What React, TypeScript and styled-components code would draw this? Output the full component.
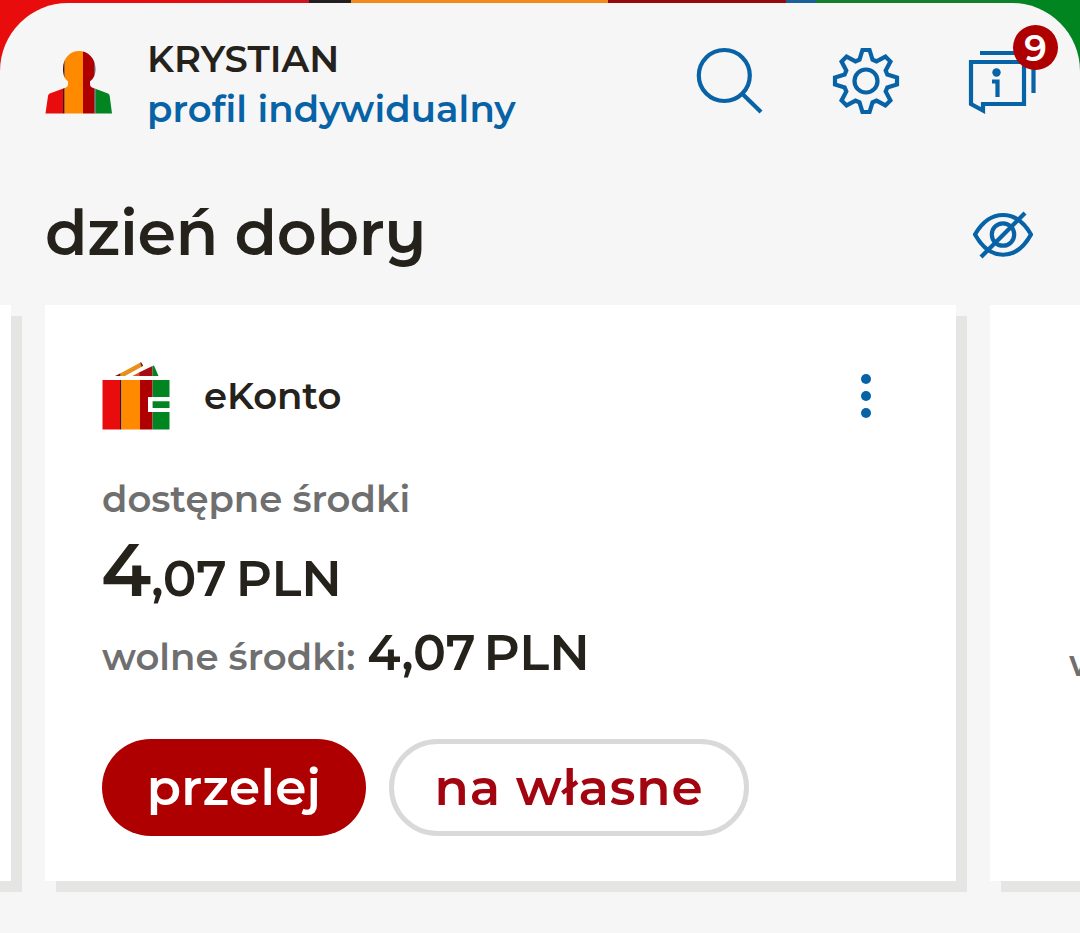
import styled, { createGlobalStyle } from "styled-components";

const colors = {
  ink: "#25221c",
  grey: "#6f6f6f",
  blue: "#0762a6",
  red: "#e80c0c",
  black: "#221f20",
  orange: "#ff8a00",
  darkRed: "#ae0000",
  green: "#008521",
  page: "#f6f6f6",
  shadow: "#e5e5e4",
};

const GlobalStyle = createGlobalStyle`
  * {
    box-sizing: border-box;
  }

  body {
    margin: 0;
    font-family: Montserrat, Inter, "Liberation Sans", sans-serif;
    font-weight: 600;
    color: ${colors.ink};
  }
`;

// The display face takes a few letter forms (n, p, r, y) from the alternate cut
const Alt = styled.span`
  font-family: "Montserrat Alternates", Montserrat, Inter, "Liberation Sans", sans-serif;
`;

const Wrapper = styled.div`
  width: 1080px;
  height: 933px;
  padding-top: 3px;
  overflow: hidden;
  background: linear-gradient(
    90deg,
    ${colors.red} 0 150px,
    #d01220 309px,
    ${colors.black} 309px 351px,
    #f58a1c 351px 608px,
    #950a10 608px 786px,
    #1c5f98 786px 816px,
    #138030 816px 980px,
    ${colors.green} 1040px
  );
`;

const Sheet = styled.main`
  height: 930px;
  border-radius: 68px 68px 0 0;
  background-color: ${colors.page};
`;

const Header = styled.header`
  display: flex;
  align-items: flex-start;
  padding: 31px 44px 0 45px;
`;

const IconBox = styled.div`
  position: relative;
  margin-top: 13px;
  height: 68px;
`;

const Icon = styled.svg`
  display: block;
  width: 68px;
  height: 68px;
  overflow: visible;
  fill: none;
  stroke: ${colors.blue};
  stroke-width: 4.2;
`;

const Logo = styled.svg`
  display: block;
  flex: none;
  width: 68px;
  height: 68px;
`;

const Profile = styled.div`
  display: flex;
  flex-direction: column;
  margin-left: 34px;
  font-size: 37px;
  line-height: 50px;
  white-space: nowrap;
`;

const ProfileKind = styled.span`
  color: ${colors.blue};
  letter-spacing: 0.1px;
`;

const Actions = styled.nav`
  display: flex;
  gap: 68px;
  margin-left: auto;
`;

const Badge = styled.span`
  position: absolute;
  top: -22px;
  left: 45px;
  display: flex;
  align-items: center;
  justify-content: center;
  width: 45px;
  height: 45px;
  border-radius: 50%;
  background-color: ${colors.darkRed};
  color: white;
  font-size: 36px;
`;

const Greeting = styled.div`
  display: flex;
  align-items: center;
  justify-content: space-between;
  height: 76px;
  margin-top: 61px;
  padding: 0 47px 0 45px;
`;

const Title = styled.h1`
  margin: 0;
  font-size: 62px;
  font-weight: 600;
  line-height: 76px;
  letter-spacing: -0.35px;
`;

const EyeIcon = styled(Icon)`
  width: 60px;
  height: 48px;
`;

const Carousel = styled.div`
  display: flex;
  gap: 34px;
  margin-top: 34px;
  margin-left: -900px;
`;

const Card = styled.section`
  flex: none;
  width: 911px;
  height: 576px;
  padding: 57px;
  background-color: white;
  box-shadow: 11px 11px 0 ${colors.shadow};
`;

const CardHeader = styled.div`
  display: flex;
  align-items: center;
`;

const AccountName = styled.h2`
  margin: 0 auto 0 34px;
  font-size: 37px;
  font-weight: 600;
  line-height: 44px;
`;

const Menu = styled.div`
  display: flex;
  flex-direction: column;
  gap: 7px;
  margin-right: 28px;
`;

const Dot = styled.i`
  width: 10px;
  height: 10px;
  border-radius: 50%;
  background-color: ${colors.blue};
`;

const Label = styled.span`
  color: ${colors.grey};
  font-size: 37px;
  line-height: 46px;
  white-space: nowrap;
`;

const AvailableLabel = styled(Label)`
  display: block;
  margin-top: 46px;
`;

const Amount = styled.div`
  display: flex;
  align-items: baseline;
  height: 74px;
  margin: 11px 0 0 -1px;
  font-size: 50px;
  line-height: 1;
`;

const Whole = styled.span`
  font-size: 74px;
  line-height: 1;
`;

const Currency = styled.span<{ $gap: number }>`
  margin-left: ${(props) => props.$gap}px;
`;

const FreeFunds = styled.div`
  display: flex;
  align-items: baseline;
  height: 50px;
  margin-top: 21px;
  font-size: 50px;
  line-height: 50px;
`;

const FreeValue = styled.span`
  margin-left: 12px;
  font-size: 49px;
`;

const Buttons = styled.div`
  display: flex;
  gap: 23px;
  margin-top: 61px;
`;

const Button = styled.button<{ $primary?: boolean }>`
  width: ${(props) => (props.$primary ? 264 : 360)}px;
  height: 97px;
  padding: 0;
  border: ${(props) => (props.$primary ? "none" : "5px solid #d9d9d9")};
  border-radius: 49px;
  background-color: ${(props) => (props.$primary ? colors.darkRed : "white")};
  color: ${(props) => (props.$primary ? "white" : "#a30510")};
  font: inherit;
  font-size: 50px;
  letter-spacing: ${(props) => (props.$primary ? 0.3 : 0.9)}px;
  white-space: nowrap;
`;

const NextCard = styled(Card)`
  padding: 335px 0 0 79px;
  overflow: hidden;
`;

// Tooth outline, built from polar points around the centre of the gear
const gearPoints = Array.from({ length: 8 }, (_, i) =>
  [
    [-6.5, 31.2],
    [6.5, 31.2],
    [17, 22.3],
    [28, 22.3],
  ].map(([deg, radius]) => {
    const angle = ((i * 45 + deg) * Math.PI) / 180;
    return `${(34 + radius * Math.sin(angle)).toFixed(2)},${(34 - radius * Math.cos(angle)).toFixed(2)}`;
  })
)
  .flat()
  .join(" ");

function UserLogo() {
  return (
    <Logo viewBox="0 0 68 68">
      <clipPath id="user">
        <path d="M18 22C18 11 25 4 34 4S50.500 11 50.500 22C50.500 28 48.500 31.500 45 34.500V37.500Q45 39.500 47 40.500L63 46.500Q64.500 47.200 64.700 49L67 66.500H.5L3 49Q3.200 47.200 4.700 46.500L21 40.500Q23 39.500 23 37.500V34.500C19.500 31.500 18 28 18 22Z" />
      </clipPath>
      <g clipPath="url(#user)">
        <path fill={colors.red} d="M0 0h18v68H0z" />
        <path fill="#4a1010" d="M18 0h1.700v68H18z" />
        <path fill={colors.orange} d="M19.700 0H38v68H19.700z" />
        <path fill={colors.darkRed} d="M38 0h11.500v68H38z" />
        <path fill="#4d3450" d="M49.500 0h1v68h-1z" />
        <path fill={colors.green} d="M50.500 0H68v68H50.500z" />
      </g>
    </Logo>
  );
}

function WalletLogo() {
  return (
    <Logo viewBox="0 0 68 68">
      <path fill={colors.red} d="M.5 18H18v49.500H.5z" />
      <path fill="#4a1010" d="M18 18h1.500v49.500H18z" />
      <path fill={colors.orange} d="M19.500 18H38v49.500H19.500z" />
      <path fill={colors.darkRed} d="M38 18h12.500v49.500H38z" />
      <path fill="#3d5a55" d="M50.500 18H51v49.500h-.5z" />
      <path fill={colors.green} d="M51 18h16.500v49.500H51z" />
      <path fill="white" d="M46 35h22v4.300H50.500v6.700H68v4H46z" />
      <path fill="#e8901c" d="M18.500 11.200L38 .8l2.200 3.700L23 14h-4.500z" />
      <path fill="#7a1a10" d="M13 14l5.500-2.800V14zM38 .8l1.200-.6 2 3.600-1.500 1z" />
      <path fill="#d8541c" d="M30.500 14l8-4.200V14z" />
      <path fill="#a80d12" d="M37.500 14v-3.700L50.500 4v10z" />
      <path fill={colors.green} d="M50.500 4L52 3.500 56.500 14h-6z" />
    </Logo>
  );
}

function App() {
  return (
    <>
      <GlobalStyle />
      <Wrapper>
        <Sheet>
          <Header>
            <IconBox>
              <UserLogo />
            </IconBox>
            <Profile>
              <span>KRYSTIAN</span>
              <ProfileKind>profil indywidualny</ProfileKind>
            </Profile>
            <Actions>
              <IconBox>
                <Icon viewBox="0 0 68 68">
                  <circle cx="28.300" cy="28.500" r="25.500" />
                  <path d="M46.500 47L65 65" />
                </Icon>
              </IconBox>
              <IconBox>
                <Icon viewBox="0 0 68 68">
                  <polygon points={gearPoints} />
                  <circle cx="34" cy="34" r="11.500" />
                </Icon>
              </IconBox>
              <IconBox>
                <Icon viewBox="0 0 68 68">
                  <path d="M12 6H56M65.500 16V46" />
                  <path d="M3 15H56V57H15V63.500L3 57Z" />
                  <path d="M24 34.500H29.500V50" />
                  <circle cx="28.500" cy="25.500" r="4.200" fill={colors.blue} stroke="none" />
                </Icon>
                <Badge>9</Badge>
              </IconBox>
            </Actions>
          </Header>
          <Greeting>
            <Title>
              dzie<Alt>ń</Alt> dob<Alt>ry</Alt>
            </Title>
            <EyeIcon viewBox="0 0 60 48">
              <path d="M2 25.500C17-.5 43-.5 58 25.500C43 52.500 17 52.500 2 25.500Z" strokeLinejoin="round" />
              <circle cx="30" cy="25.500" r="11.200" />
              <path d="M8 48L52 4" />
            </EyeIcon>
          </Greeting>
          <Carousel>
            <Card />
            <Card>
              <CardHeader>
                <WalletLogo />
                <AccountName>eKonto</AccountName>
                <Menu>
                  <Dot />
                  <Dot />
                  <Dot />
                </Menu>
              </CardHeader>
              <AvailableLabel>dostępne środki</AvailableLabel>
              <Amount>
                <Whole>4</Whole>
                <span>,07</span>
                <Currency $gap={9}>PLN</Currency>
              </Amount>
              <FreeFunds>
                <Label>wolne środki:</Label>
                <FreeValue>4,07</FreeValue>
                <Currency $gap={8}>PLN</Currency>
              </FreeFunds>
              <Buttons>
                <Button $primary>
                  <Alt>pr</Alt>zelej
                </Button>
                <Button>
                  <Alt>n</Alt>a włas<Alt>n</Alt>e
                </Button>
              </Buttons>
            </Card>
            <NextCard>
              <Label>wolne środki:</Label>
            </NextCard>
          </Carousel>
        </Sheet>
      </Wrapper>
    </>
  );
}

export default App;
